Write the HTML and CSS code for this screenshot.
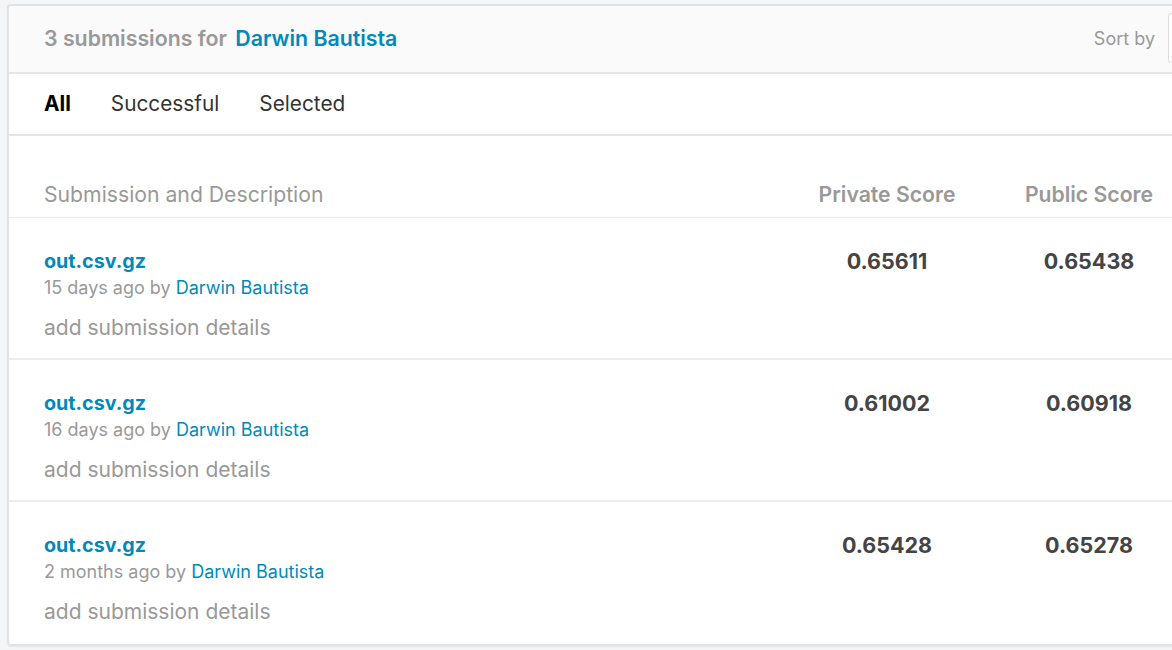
FILE: index.html
```html
<!DOCTYPE html>
<html>
<head>
<meta charset="utf-8">
<link rel="stylesheet" href="styles.css">
</head>
<body>
<div class="card">
  <div class="card-header">
    <div class="title"><span class="muted">3 submissions for</span> <a class="link">Darwin Bautista</a></div>
    <div class="sort"><span>Sort by</span><div class="select"></div></div>
  </div>
  <div class="tabs">
    <span class="tab active">All</span>
    <span class="tab">Successful</span>
    <span class="tab">Selected</span>
  </div>
  <div class="table">
    <div class="thead row">
      <div class="c-desc">Submission and Description</div>
      <div class="c-score th-bold">Private Score</div>
      <div class="c-score th-bold">Public Score</div>
    </div>
    <div class="row item">
      <div class="c-desc">
        <a class="file">out.csv.gz</a>
        <div class="meta">15 days ago by <a class="link">Darwin Bautista</a></div>
        <div class="details">add submission details</div>
      </div>
      <div class="c-score score">0.65611</div>
      <div class="c-score score">0.65438</div>
    </div>
    <div class="row item">
      <div class="c-desc">
        <a class="file">out.csv.gz</a>
        <div class="meta">16 days ago by <a class="link">Darwin Bautista</a></div>
        <div class="details">add submission details</div>
      </div>
      <div class="c-score score">0.61002</div>
      <div class="c-score score">0.60918</div>
    </div>
    <div class="row item last">
      <div class="c-desc">
        <a class="file">out.csv.gz</a>
        <div class="meta">2 months ago by <a class="link">Darwin Bautista</a></div>
        <div class="details">add submission details</div>
      </div>
      <div class="c-score score">0.65428</div>
      <div class="c-score score">0.65278</div>
    </div>
  </div>
</div>
</body>
</html>
```

FILE: styles.css
```css
html, body {
  margin: 0;
  padding: 0;
  background: #f3f5f6;
  overflow: hidden;
  height: 650px;
}
body {
  padding: 4px 0 0 7px;
  font-family: Inter, "Liberation Sans", sans-serif;
  color: #333;
}
.card {
  width: 1190px;
  background: #fff;
  border: 2px solid #e1e3e4;
  border-radius: 4px;
  box-shadow: 0 1px 2px rgba(0,0,0,0.06);
  box-sizing: border-box;
  height: 642px;
  overflow: hidden;
}
.card-header {
  height: 68px;
  background: #fafafa;
  border-bottom: 2px solid #e6e6e6;
  display: flex;
  align-items: center;
  justify-content: space-between;
  padding: 0 0 0 35px;
  box-sizing: border-box;
}
.title {
  font-size: 21.3px;
  font-weight: 600;
  margin-top: -2px;
}
.muted { color: #999; }
.link { color: #008abc; text-decoration: none; }
.title .link { margin-left: 3px; }
.sort {
  display: flex;
  align-items: center;
  gap: 13px;
  color: #999;
  font-size: 18px;
  margin-top: -2px;
}
.select {
  width: 26px;
  height: 48px;
  border: 1px solid #ddd;
  border-right: none;
  border-radius: 4px 0 0 4px;
  background: #fff;
}
.tabs {
  height: 62px;
  display: flex;
  align-items: center;
  gap: 40px;
  padding-left: 35px;
  padding-bottom: 2px;
  border-bottom: 2px solid #e4e4e4;
  box-sizing: border-box;
  font-size: 20.8px;
}
.tab { color: #333; }
.tab.active { color: #000; font-weight: 700; }
.row {
  display: grid;
  grid-template-columns: 1fr 162px 162px;
  column-gap: 40px;
  padding: 0 25px 0 35px;
}
.thead {
  height: 82px;
  align-items: end;
  padding-bottom: 10px;
  box-sizing: border-box;
  border-bottom: 1px solid #ececec;
  font-size: 21.2px;
  color: #999;
}
.c-score { text-align: center; }
.th-bold { font-weight: 600; }
.item {
  height: 142px;
  box-sizing: border-box;
  border-bottom: 2px solid #ececec;
  padding-top: 30px;
}
.item.last { border-bottom: none; }
.file {
  display: block;
  color: #008abc;
  font-weight: 700;
  font-size: 19.7px;
  line-height: 26px;
}
.meta {
  font-size: 18px;
  color: #999;
  line-height: 26px;
  margin-top: 1px;
}
.details {
  font-size: 21px;
  color: #999;
  margin-top: 14px;
  line-height: 26px;
}
.score {
  font-size: 21.5px;
  font-weight: 650;
  color: #444;
  line-height: 26px;
}
```
